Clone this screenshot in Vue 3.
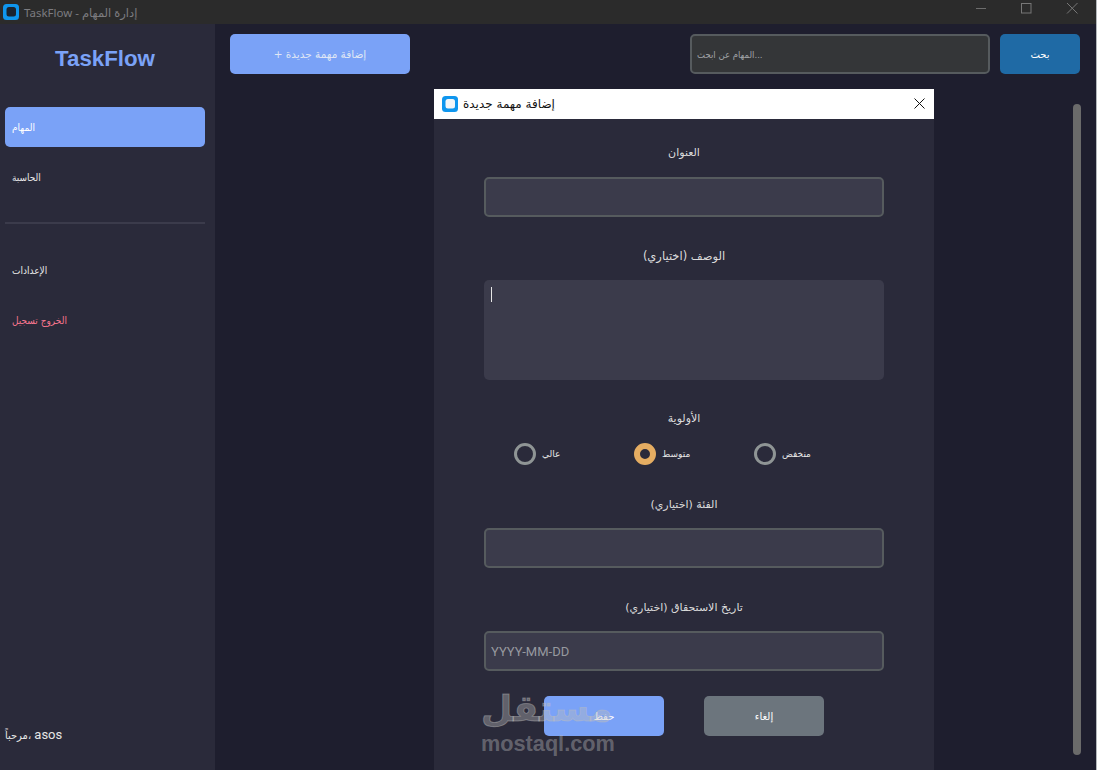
<template>
  <div class="window">
    <header class="titlebar">
      <svg class="app-icon" width="16" height="16" viewBox="0 0 16 16">
        <rect width="16" height="16" rx="3.5" fill="#0f96ee" />
        <rect x="3.5" y="3" width="9.5" height="9.5" rx="2.5" fill="#1b2430" />
      </svg>
      <span class="titlebar-text">TaskFlow - إدارة المهام</span>
      <div class="win-controls">
        <svg width="46" height="16" viewBox="0 0 46 16"><path d="M18 8.5h10" stroke="#6d6d6d" fill="none" /></svg>
        <svg width="46" height="16" viewBox="0 0 46 16"><rect x="17.5" y="3.5" width="9.5" height="9.5" stroke="#777" fill="none" /></svg>
        <svg width="46" height="16" viewBox="0 0 46 16"><path d="M17 3l10.500 10.500M27.500 3L17 13.500" stroke="#777" fill="none" /></svg>
      </div>
    </header>

    <div class="body">
      <aside class="sidebar">
        <div class="brand">TaskFlow</div>
        <nav class="nav">
          <a
            v-for="item in topNav"
            :key="item.label"
            class="nav-item"
            :class="{ active: item.active }"
          >{{ item.label }}</a>
        </nav>
        <div class="divider"></div>
        <nav class="nav">
          <a class="nav-item">الإعدادات</a>
          <a class="nav-item logout" dir="rtl">الخروج تسجيل</a>
        </nav>
        <div class="greeting"><span class="greeting-ar">مرحباً،</span> asos</div>
      </aside>

      <main class="main">
        <div class="toolbar">
          <button class="btn add-btn">+ إضافة مهمة جديدة</button>
          <input class="search" type="text" dir="rtl" placeholder="...المهام عن ابحث" />
          <button class="btn search-btn">بحث</button>
        </div>
        <div class="list">
          <div class="scroll-thumb"></div>
        </div>
      </main>
    </div>

    <section class="dialog">
      <div class="dialog-head">
        <svg class="app-icon" width="16" height="16" viewBox="0 0 16 16">
          <rect width="16" height="16" rx="3.5" fill="#0f96ee" />
          <rect x="3.5" y="3" width="9.5" height="9.5" rx="2.5" fill="#f4f6f8" />
        </svg>
        <span class="dialog-title">إضافة مهمة جديدة</span>
        <svg class="dialog-close" width="11" height="11" viewBox="0 0 11 11">
          <path d="M.5.5l10 10M10.500.5l-10 10" stroke="#111" fill="none" />
        </svg>
      </div>

      <form class="dialog-body" @submit.prevent>
        <label class="field-label first">العنوان</label>
        <input class="field" type="text" />

        <label class="field-label wide">الوصف (اختياري)</label>
        <div class="area-wrap">
          <textarea class="area"></textarea>
          <span class="caret"></span>
        </div>

        <label class="field-label tight">الأولوية</label>
        <div class="radios">
          <label v-for="p in priorities" :key="p.value" class="radio">
            <span class="dot" :class="{ checked: priority === p.value }"></span>
            <span class="radio-text">{{ p.label }}</span>
          </label>
        </div>

        <label class="field-label">الفئة (اختياري)</label>
        <input class="field" type="text" />

        <label class="field-label">تاريخ الاستحقاق (اختياري)</label>
        <input class="field date" type="text" placeholder="YYYY-MM-DD" />

        <div class="actions">
          <button class="btn save-btn">حفظ</button>
          <button class="btn cancel-btn">إلغاء</button>
        </div>
      </form>
    </section>

    <div class="watermark">
      <div class="wm-ar">مستقل</div>
      <div class="wm-en">mostaql.com</div>
    </div>
  </div>
</template>

<script setup>
import { ref } from 'vue';

const topNav = [
  { label: 'المهام', active: true },
  { label: 'الحاسبة', active: false }
];

const priorities = [
  { value: 'high', label: 'عالي' },
  { value: 'medium', label: 'متوسط' },
  { value: 'low', label: 'منخفض' }
];

const priority = ref('medium');
</script>

<style>
html, body {
  margin: 0;
  background: #1e1e2e;
}
</style>

<style scoped>
.window {
  position: relative;
  width: 1097px;
  height: 770px;
  box-sizing: border-box;
  border-right: 1px solid #b4b8bc;
  overflow: hidden;
  display: flex;
  flex-direction: column;
  font-family: "DejaVu Sans", sans-serif;
  font-size: 10px;
  color: #e6e6e6;
  background: #1e1e2e;
}

.titlebar {
  height: 24px;
  flex: none;
  display: flex;
  align-items: center;
  padding-left: 3px;
  background: #2b2b2b;
}

.app-icon {
  flex: none;
}

.titlebar-text {
  margin-left: 5px;
  font-family: "Noto Sans", "DejaVu Sans", sans-serif;
  font-size: 11.500px;
  color: #7c7c80;
}

.win-controls {
  margin-left: auto;
  align-self: flex-start;
  display: flex;
}

.body {
  flex: 1;
  display: flex;
  min-height: 0;
}

.sidebar {
  width: 215px;
  flex: none;
  display: flex;
  flex-direction: column;
  padding: 0 10px 0 5px;
  box-sizing: border-box;
  background: #2a2a3a;
}

.brand {
  margin-top: 20px;
  height: 28px;
  line-height: 29px;
  text-align: center;
  font-family: "Liberation Sans", sans-serif;
  font-size: 22.300px;
  font-weight: 700;
  color: #7aa2f7;
}

.nav {
  display: flex;
  flex-direction: column;
  gap: 10px;
}

.sidebar .nav:first-of-type {
  margin-top: 35px;
}

.nav-item {
  height: 40px;
  line-height: 41px;
  padding: 0 7px;
  border-radius: 5px;
  font-family: "DejaVu Sans Condensed", "DejaVu Sans", sans-serif;
  font-stretch: condensed;
  color: #e8e8e8;
}

.nav-item.active {
  background: #7aa2f7;
  color: #fff;
}

.nav-item.logout {
  color: #f7768e;
  align-self: flex-start;
  white-space: nowrap;
}

.divider {
  height: 2px;
  margin: 25px 0 26px;
  background: #3b3b4b;
}

.greeting {
  margin-top: auto;
  margin-bottom: 26px;
  font-family: "Roboto", "DejaVu Sans", sans-serif;
  font-size: 13px;
  line-height: 16px;
  color: #e6e6e6;
}

.greeting-ar {
  font-family: "DejaVu Sans Condensed", "DejaVu Sans", sans-serif;
  font-stretch: condensed;
  font-size: 11px;
}

.main {
  flex: 1;
  min-width: 0;
  display: flex;
  flex-direction: column;
  padding: 10px 15px 15px;
}

.toolbar {
  display: flex;
  align-items: center;
  margin-right: 1px;
}

.btn {
  height: 40px;
  padding: 0;
  border: none;
  border-radius: 5px;
  font-family: inherit;
  font-size: 10px;
  color: #fff;
}

.add-btn {
  width: 180px;
  background: #7aa2f7;
  color: #dfe6f5;
  font-size: 10.500px;
}

.search {
  width: 300px;
  height: 40px;
  margin-left: auto;
  padding: 0 5px;
  box-sizing: border-box;
  border: 2px solid #565b5e;
  border-radius: 5px;
  background: #343638;
  color: #ddd;
  font-family: "DejaVu Sans Condensed", "DejaVu Sans", sans-serif;
  font-stretch: condensed;
  font-size: 9.500px;
  text-align: left;
  outline: none;
}

.search::placeholder {
  color: #a0a3a6;
}

.search-btn {
  width: 80px;
  margin-left: 10px;
  background: #1f6aa5;
}

.list {
  flex: 1;
  display: flex;
  justify-content: flex-end;
  margin-top: 30px;
}

.scroll-thumb {
  width: 8px;
  border-radius: 4px;
  background: #6a6a6a;
}

.dialog {
  position: absolute;
  left: 434px;
  top: 89px;
  width: 500px;
  bottom: 0;
  display: flex;
  flex-direction: column;
  background: #2a2a3a;
}

.dialog-head {
  height: 30px;
  flex: none;
  display: flex;
  align-items: center;
  padding: 0 9px 0 8px;
  background: #fff;
}

.dialog-title {
  margin-left: 5px;
  font-size: 12px;
  color: #111;
}

.dialog-close {
  margin-left: auto;
  margin-top: -2px;
}

.dialog-body {
  display: flex;
  flex-direction: column;
  align-items: center;
  padding-top: 23px;
}

.field-label {
  height: 20px;
  line-height: 21px;
  margin: 29px 0 14px;
  font-size: 11px;
  color: #dcdcdc;
}

.field-label.first {
  margin: 0 0 15px;
}

.field-label.wide {
  font-size: 11.500px;
}

.field-label.tight {
  margin: 28px 0 15px;
}

.field {
  width: 400px;
  height: 40px;
  padding: 0 5px;
  box-sizing: border-box;
  border: 2px solid #565b5e;
  border-radius: 5px;
  background: #3b3b4b;
  color: #ddd;
  font-family: "Roboto", sans-serif;
  font-size: 13px;
  outline: none;
}

.field.date::placeholder {
  color: #97999f;
}

.area-wrap {
  position: relative;
  width: 400px;
  height: 100px;
}

.area {
  display: block;
  width: 100%;
  height: 100%;
  padding: 0;
  border: none;
  border-radius: 5px;
  background: #3b3b4b;
  resize: none;
  outline: none;
}

.caret {
  position: absolute;
  left: 7px;
  top: 7px;
  width: 1px;
  height: 15px;
  background: #e6e6e6;
}

.radios {
  width: 400px;
  box-sizing: border-box;
  padding-left: 30px;
  display: flex;
}

.radio {
  width: 120px;
  display: flex;
  align-items: center;
  gap: 6px;
  font-size: 9px;
  color: #e6e6e6;
}

.dot {
  width: 22px;
  height: 22px;
  box-sizing: border-box;
  border: 3px solid #8f9595;
  border-radius: 50%;
}

.dot.checked {
  border: 6px solid #e5ad62;
}

.actions {
  width: 280px;
  display: flex;
  justify-content: space-between;
  margin-top: 25px;
}

.save-btn,
.cancel-btn {
  width: 120px;
}

.save-btn {
  background: #7aa2f7;
}

.cancel-btn {
  background: #6c757d;
}

.watermark {
  position: absolute;
  left: 481px;
  top: 686px;
  color: rgba(190, 190, 190, 0.4);
  pointer-events: none;
}

.wm-ar {
  height: 46px;
  line-height: 46px;
  font-size: 36px;
  font-weight: 700;
  -webkit-text-stroke: 1px rgba(190, 190, 190, 0.4);
}

.wm-en {
  font-family: "Liberation Sans", sans-serif;
  font-size: 21.700px;
  line-height: 24px;
  font-weight: 700;
}
</style>
